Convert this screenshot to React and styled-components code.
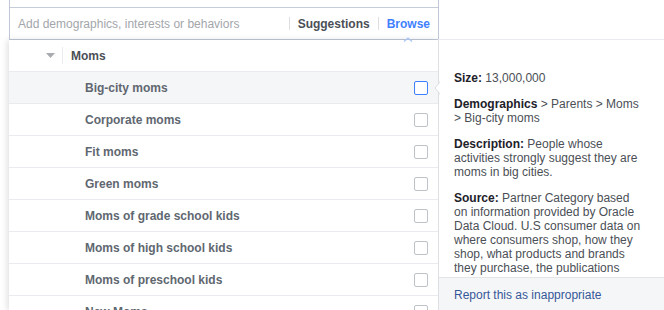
import React from "react";
import styled, { createGlobalStyle } from "styled-components";

const Global = createGlobalStyle`
  html, body { margin: 0; padding: 0; background: #fff; }
  body { font-family: "Liberation Sans", Arial, Helvetica, sans-serif; font-size: 12px; color: #4b4f56; overflow: hidden; }
  * { box-sizing: border-box; }
`;

const Page = styled.div`
  display: flex;
  align-items: flex-start;
  width: 664px;
  height: 310px;
  overflow: hidden;
`;

const LeftCol = styled.div`
  margin-left: 9px;
  width: 430px;
  flex: none;
  display: flex;
  flex-direction: column;
`;

const SearchBox = styled.div`
  border: 1px solid #bfc8d7;
  border-top: none;
`;

const TopStrip = styled.div`
  height: 8px;
  border-bottom: 1px solid #c6cdda;
`;

const InputRow = styled.div`
  height: 31px;
  display: flex;
  align-items: center;
  padding: 0 8px 0 8px;
`;

const Placeholder = styled.div`
  flex: 1;
  color: #a3a6ab;
  font-size: 12px;
`;

const Divider = styled.span`
  width: 1px;
  height: 13px;
  background: #dddfe2;
  margin: 0 ${(p) => p.$gap || 8}px;
`;

const Tab = styled.span`
  position: relative;
  font-weight: bold;
  font-size: 12px;
  color: ${(p) => (p.$active ? "#4080ff" : "#4b4f56")};
`;

const Caret = styled.svg`
  position: absolute;
  left: 50%;
  bottom: -11px;
  margin-left: -5px;
`;

const Dropdown = styled.div`
  width: 429px;
  height: 271px;
  background: #fff;
  box-shadow: -2px 0 6px rgba(0, 0, 0, 0.12);
  overflow: hidden;
`;

const HeaderRow = styled.div`
  height: 32px;
  display: flex;
  align-items: center;
  border-bottom: 1px solid #e9ebee;
  padding-left: 37px;
`;

const HeaderSep = styled.span`
  width: 1px;
  height: 17px;
  background: #e9ebee;
  margin: 0 8px 0 7px;
`;

const HeaderLabel = styled.span`
  font-weight: bold;
  color: #4b4f56;
`;

const Row = styled.div`
  height: 32px;
  display: flex;
  align-items: center;
  border-bottom: 1px solid #e9ebee;
  background: ${(p) => (p.$hover ? "#f5f6f7" : "#fff")};
  padding: 0 10px 0 76px;
`;

const RowLabel = styled.span`
  flex: 1;
  font-weight: bold;
  color: #606770;
`;

const Check = styled.span`
  width: 14px;
  height: 14px;
  border: 1px solid ${(p) => (p.$focus ? "#4080ff" : "#bec3c9")};
  border-radius: 2px;
  background: #fff;
`;

const Panel = styled.div`
  position: relative;
  margin-top: 39px;
  margin-left: -1px;
  width: 227px;
  flex: none;
  border-top: 1px solid #e9ebee;
  border-left: 1px solid #dddfe2;
  background: #fff;
`;

const Pointer = styled.svg`
  position: absolute;
  left: -5px;
  top: 42px;
`;

const PanelBody = styled.div`
  height: 237px;
  overflow: hidden;
  padding: 31px 22px 0 15px;
`;

const Para = styled.p`
  margin: 0 0 12px;
  line-height: 14px;
  font-size: 12px;
  color: #4b4f56;
`;

const Strong = styled.b`
  color: #1d2129;
`;

const Footer = styled.div`
  height: 40px;
  border-top: 1px solid #e5e5e5;
  background: #f5f6f7;
  padding: 10px 15px 0;
  line-height: 14px;
`;

const ReportLink = styled.a`
  color: #365899;
  text-decoration: none;
  font-size: 12px;
`;

const items = [
  "Big-city moms",
  "Corporate moms",
  "Fit moms",
  "Green moms",
  "Moms of grade school kids",
  "Moms of high school kids",
  "Moms of preschool kids",
  "New Moms",
];

export default function App() {
  return (
    <>
      <Global />
      <Page>
        <LeftCol>
          <SearchBox>
            <TopStrip />
            <InputRow>
              <Placeholder>Add demographics, interests or behaviors</Placeholder>
              <Divider $gap={8} />
              <Tab>Suggestions</Tab>
              <Divider $gap={8} />
              <Tab $active>
                Browse
                <Caret width="10" height="5" viewBox="0 0 10 5">
                  <polyline points="1,4.5 5,1 9,4.5" fill="none" stroke="#a9c4f5" strokeWidth="1.2" />
                </Caret>
              </Tab>
            </InputRow>
          </SearchBox>
          <Dropdown>
            <HeaderRow>
              <svg width="9" height="5" viewBox="0 0 9 5">
                <polygon points="0,0 9,0 4.5,5" fill="#a8abaf" />
              </svg>
              <HeaderSep />
              <HeaderLabel>Moms</HeaderLabel>
            </HeaderRow>
            {items.map((it, i) => (
              <Row key={it} $hover={i === 0}>
                <RowLabel>{it}</RowLabel>
                <Check $focus={i === 0} />
              </Row>
            ))}
          </Dropdown>
        </LeftCol>
        <Panel>
          <Pointer width="6" height="12" viewBox="0 0 6 12">
            <polygon points="6,0 1,6 6,12" fill="#fff" />
            <polyline points="6,0 1,6 6,12" fill="none" stroke="#dddfe2" strokeWidth="1" />
          </Pointer>
          <PanelBody>
            <Para>
              <Strong>Size:</Strong> 13,000,000
            </Para>
            <Para>
              <Strong>Demographics</Strong> &gt; Parents &gt; Moms &gt; Big-city moms
            </Para>
            <Para>
              <Strong>Description:</Strong> People whose activities strongly suggest they are moms in big cities.
            </Para>
            <Para>
              <Strong>Source:</Strong> Partner Category based on information provided by Oracle Data Cloud. U.S consumer data on where consumers shop, how they shop, what products and brands they purchase, the publications they read and more.
            </Para>
          </PanelBody>
          <Footer>
            <ReportLink href="#">Report this as inappropriate</ReportLink>
          </Footer>
        </Panel>
      </Page>
    </>
  );
}
